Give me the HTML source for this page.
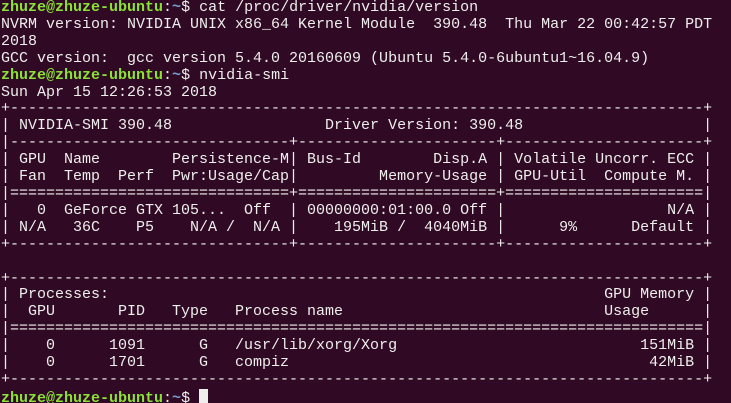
<!DOCTYPE html>
<html><head><meta charset="utf-8"><style>
html,body{margin:0;padding:0;background:#300a24;width:731px;height:403px;overflow:hidden}
pre{margin:0;padding:0 0 0 1px;font-family:"Liberation Mono",monospace;font-size:15px;line-height:16.9px;color:#eeeeec;white-space:pre}
.g{color:#8ae234;font-weight:bold}.b{color:#729fcf;font-weight:bold}
.c{display:inline-block;width:9px;height:16px;background:#eeeeec;vertical-align:-3px}
</style></head><body><pre><span class="g">zhuze@zhuze-ubuntu</span>:<span class="b">~</span>$ cat /proc/driver/nvidia/version
NVRM version: NVIDIA UNIX x86_64 Kernel Module  390.48  Thu Mar 22 00:42:57 PDT
2018
GCC version:  gcc version 5.4.0 20160609 (Ubuntu 5.4.0-6ubuntu1~16.04.9)
<span class="g">zhuze@zhuze-ubuntu</span>:<span class="b">~</span>$ nvidia-smi
Sun Apr 15 12:26:53 2018
+-----------------------------------------------------------------------------+
| NVIDIA-SMI 390.48                 Driver Version: 390.48                    |
|-------------------------------+----------------------+----------------------+
| GPU  Name        Persistence-M| Bus-Id        Disp.A | Volatile Uncorr. ECC |
| Fan  Temp  Perf  Pwr:Usage/Cap|         Memory-Usage | GPU-Util  Compute M. |
|===============================+======================+======================|
|   0  GeForce GTX 105...  Off  | 00000000:01:00.0 Off |                  N/A |
| N/A   36C    P5    N/A /  N/A |    195MiB /  4040MiB |      9%      Default |
+-------------------------------+----------------------+----------------------+

+-----------------------------------------------------------------------------+
| Processes:                                                       GPU Memory |
|  GPU       PID   Type   Process name                             Usage      |
|=============================================================================|
|    0      1091      G   /usr/lib/xorg/Xorg                           151MiB |
|    0      1701      G   compiz                                        42MiB |
+-----------------------------------------------------------------------------+
<span class="g">zhuze@zhuze-ubuntu</span>:<span class="b">~</span>$ <span class="c"></span></pre></body></html>
